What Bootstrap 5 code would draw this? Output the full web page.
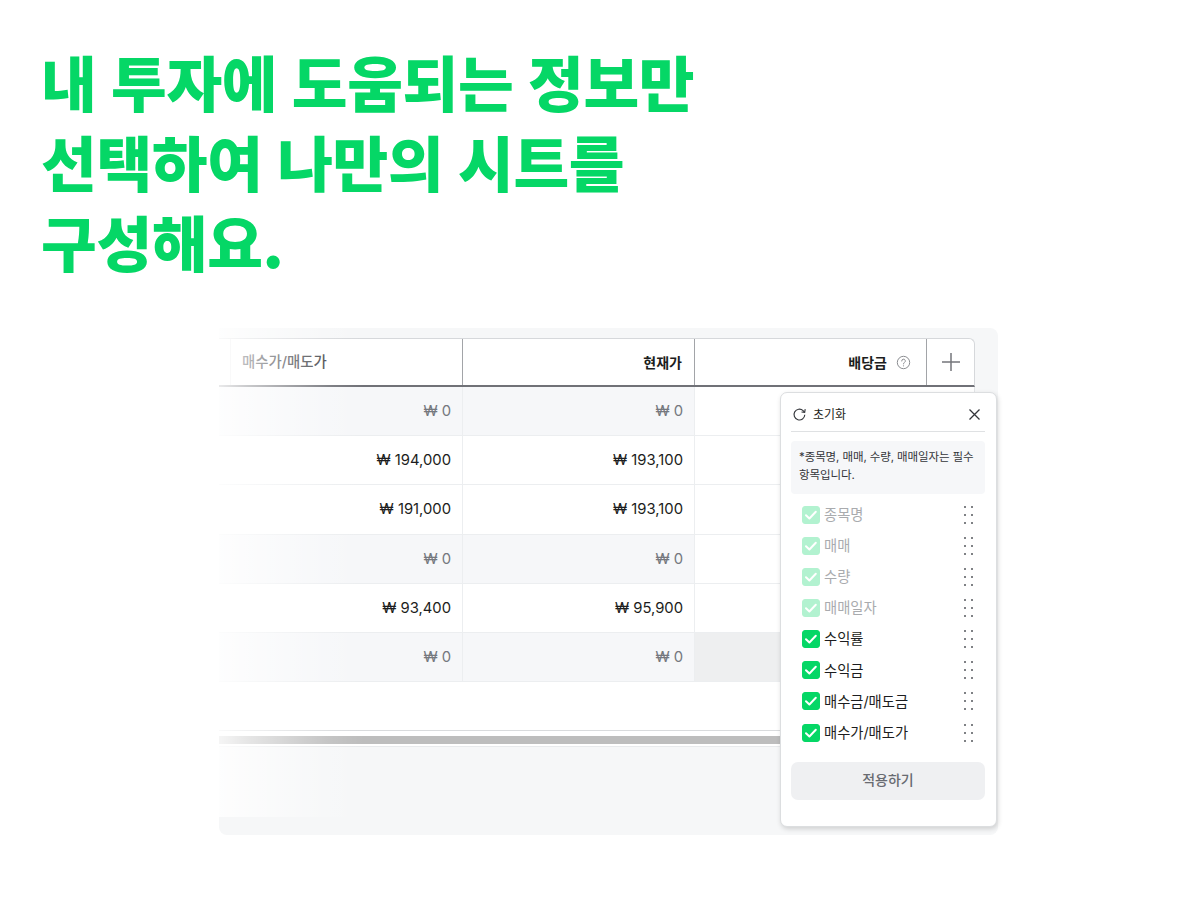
<!DOCTYPE html>
<html lang="ko">
<head>
<meta charset="utf-8">
<title>내 투자에 도움되는 정보만</title>
<link href="https://cdn.jsdelivr.net/npm/bootstrap@5.3.0/dist/css/bootstrap.min.css" rel="stylesheet">
<style>
html,body{height:100%;}
body{background:#fff;overflow:hidden;font-family:Inter,"Noto Sans CJK KR",sans-serif;color:#1c1d20;}
.headline{margin:0;padding:41px 0 0 41px;height:328px;font-family:"Noto Sans CJK KR",sans-serif;font-weight:900;font-size:60.6px;line-height:80px;letter-spacing:-.35px;word-spacing:-2px;color:#05d766;}
.frame{position:relative;margin-left:219px;width:779px;height:507px;padding-top:10px;background:#f6f7f8;border-radius:0 8px 8px 8px;}
.sheet{width:756px;}
.head-row{height:49px;background:#fff;border-top:1px solid #d6d8db;border-bottom:2px solid #707177;border-top-right-radius:6px;border-right:1px solid #d6d8db;font-size:14px;font-weight:500;}
.colw{width:244px;flex:none;}
.colm{width:232px;flex:none;}
.coll{flex:1 1 0;}
.head-cell{height:100%;padding:0 12px;display:flex;align-items:center;justify-content:flex-end;border-right:1px solid #a2a4a8;font-weight:700;}
.head-cell.first{justify-content:flex-start;padding-left:11px;margin-left:11px;width:233px;color:#3f4146;font-weight:500;font-size:14.4px;border-left:1px solid #e6e7e9;}
.head-cell.info{padding-right:15px;}
.info-icon{margin-left:9px;}
.head-add{display:flex;align-items:center;justify-content:center;height:100%;flex:1 1 0;}
.body-wrap{background:#fff;height:344px;border-bottom:1px solid #d9dbdd;border-right:1px solid #e4e6e8;}
.data-row{height:49.2px;border-bottom:1px solid #eceef0;font-size:14.8px;}
.data-row.zero{background:#f6f7f9;color:#75787e;}
.data-cell{height:100%;padding:0 11px 0 0;display:flex;align-items:center;justify-content:flex-end;border-right:1px solid #eceef0;}
.data-cell.hl{background:#eeeff0;border-right:0;}
.track{height:16px;width:756px;background:#fff;border-bottom:1px solid #e8eaec;padding-top:5px;}
.thumb{height:8px;background:#bdbdbd;}
.fade-left{position:absolute;left:0;top:0;width:145px;height:489px;background:linear-gradient(90deg,rgba(255,255,255,.85) 0,rgba(255,255,255,.62) 20%,rgba(255,255,255,.34) 50%,rgba(255,255,255,.1) 78%,rgba(255,255,255,0) 100%);pointer-events:none;}
.popover-panel{position:absolute;left:561px;top:64px;width:217px;height:435px;background:#fff;border:1px solid #dcdee0;border-radius:7px;box-shadow:1px 2px 5px rgba(0,0,0,.16);padding:0 11px 0 10px;}
.panel-top{height:39px;border-bottom:1px solid #dfe1e3;font-size:12px;padding:5px 4px 0 1px;}
.reset-label{margin-left:2px;}
.note{margin-top:9px;background:#f6f7f9;border-radius:4px;height:53px;padding:7px 8px;font-size:11.5px;line-height:18px;color:#33353a;letter-spacing:-.1px;}
.pick-list{margin-top:5px;}
.pick{height:31.15px;padding:0 11px;font-size:14.3px;display:flex;align-items:center;justify-content:space-between;}
.pick .form-check-input{width:18px;height:18px;margin:0 4px 0 0;border-radius:3px;background-color:#05d766;border-color:#05d766;opacity:1;float:none;background-size:18px 18px;}
.pick .form-check-input:checked{background-image:url("data:image/svg+xml,%3Csvg xmlns='http://www.w3.org/2000/svg' viewBox='0 0 18 18'%3E%3Cpath fill='none' stroke='%23fff' stroke-width='2' stroke-linecap='round' stroke-linejoin='round' d='M4 9.3l3.4 3.2L13.8 5.8'/%3E%3C/svg%3E");}
.pick.locked .form-check-input{opacity:.3;}
.pick.locked .pick-name{color:#a9abae;opacity:1;}
.pick-name{color:#1c1d20;}
.apply{display:block;width:100%;height:38px;margin-top:14px;padding:0 0 3px;border:0;border-radius:7px;background:#eff0f2;color:#686b71;font-size:14px;font-weight:500;}
</style>
</head>
<body>
<h1 class="headline">내 투자에 도움되는 정보만<br>선택하여 나만의 시트를<br>구성해요.</h1>
<div class="frame">
  <div class="sheet">
    <div class="head-row d-flex">
      <div class="colw head-cell first">매수가/매도가</div>
      <div class="colm head-cell">현재가</div>
      <div class="colm head-cell info"><span>배당금</span>
        <svg class="info-icon" width="15" height="15" viewBox="0 0 15 15" fill="none" stroke="#8c8e92" stroke-width="1"><circle cx="7.5" cy="7.5" r="6.2"/><path d="M5.7 6a1.8 1.8 0 1 1 2.7 1.5c-.6.4-.9.7-.9 1.4" stroke-linecap="round"/><circle cx="7.5" cy="10.8" r=".6" fill="#8c8e92" stroke="none"/></svg>
      </div>
      <div class="head-add"><svg width="18" height="18" viewBox="0 0 18 18" stroke="#74767b" stroke-width="1.5"><path d="M9 0v18M0 9h18"/></svg></div>
    </div>
    <div class="body-wrap">
      <div class="data-row zero d-flex"><div class="colw data-cell">₩ 0</div><div class="colm data-cell">₩ 0</div><div class="coll bg-white"></div></div>
      <div class="data-row d-flex"><div class="colw data-cell">₩ 194,000</div><div class="colm data-cell">₩ 193,100</div><div class="coll"></div></div>
      <div class="data-row d-flex"><div class="colw data-cell">₩ 191,000</div><div class="colm data-cell">₩ 193,100</div><div class="coll"></div></div>
      <div class="data-row zero d-flex"><div class="colw data-cell">₩ 0</div><div class="colm data-cell">₩ 0</div><div class="coll bg-white"></div></div>
      <div class="data-row d-flex"><div class="colw data-cell">₩ 93,400</div><div class="colm data-cell">₩ 95,900</div><div class="coll"></div></div>
      <div class="data-row zero d-flex"><div class="colw data-cell">₩ 0</div><div class="colm data-cell">₩ 0</div><div class="coll data-cell hl"></div></div>
    </div>
    <div class="track"><div class="thumb"></div></div>
  </div>
  <div class="fade-left"></div>
  <div class="popover-panel">
    <div class="panel-top d-flex align-items-center justify-content-between">
      <span class="d-flex align-items-center gap-1">
        <svg width="15" height="15" viewBox="0 0 15 15" fill="none" stroke="#33353a" stroke-width="1.1"><path d="M12.8 7.8a5.4 5.4 0 1 1-1.7-4.2l1.4 1.6"/><path d="M13.2 2.2l-.5 3.2-3.2-.4"/></svg>
        <span class="reset-label">초기화</span>
      </span>
      <svg width="13" height="13" viewBox="0 0 13 13" stroke="#33353a" stroke-width="1.3"><path d="M1.5 1.5l10 10M11.5 1.5l-10 10"/></svg>
    </div>
    <div class="note">*종목명, 매매, 수량, 매매일자는 필수 항목입니다.</div>
    <div class="pick-list">
      <div class="pick locked"><span class="d-flex align-items-center"><input class="form-check-input" type="checkbox" checked disabled><span class="pick-name">종목명</span></span><svg width="10" height="18" viewBox="0 0 10 18" fill="#55575c"><circle cx="1" cy="1" r="1"/><circle cx="8" cy="1" r="1"/><circle cx="1" cy="9" r="1"/><circle cx="8" cy="9" r="1"/><circle cx="1" cy="17" r="1"/><circle cx="8" cy="17" r="1"/></svg></div>
      <div class="pick locked"><span class="d-flex align-items-center"><input class="form-check-input" type="checkbox" checked disabled><span class="pick-name">매매</span></span><svg width="10" height="18" viewBox="0 0 10 18" fill="#55575c"><circle cx="1" cy="1" r="1"/><circle cx="8" cy="1" r="1"/><circle cx="1" cy="9" r="1"/><circle cx="8" cy="9" r="1"/><circle cx="1" cy="17" r="1"/><circle cx="8" cy="17" r="1"/></svg></div>
      <div class="pick locked"><span class="d-flex align-items-center"><input class="form-check-input" type="checkbox" checked disabled><span class="pick-name">수량</span></span><svg width="10" height="18" viewBox="0 0 10 18" fill="#55575c"><circle cx="1" cy="1" r="1"/><circle cx="8" cy="1" r="1"/><circle cx="1" cy="9" r="1"/><circle cx="8" cy="9" r="1"/><circle cx="1" cy="17" r="1"/><circle cx="8" cy="17" r="1"/></svg></div>
      <div class="pick locked"><span class="d-flex align-items-center"><input class="form-check-input" type="checkbox" checked disabled><span class="pick-name">매매일자</span></span><svg width="10" height="18" viewBox="0 0 10 18" fill="#55575c"><circle cx="1" cy="1" r="1"/><circle cx="8" cy="1" r="1"/><circle cx="1" cy="9" r="1"/><circle cx="8" cy="9" r="1"/><circle cx="1" cy="17" r="1"/><circle cx="8" cy="17" r="1"/></svg></div>
      <div class="pick"><span class="d-flex align-items-center"><input class="form-check-input" type="checkbox" checked><span class="pick-name">수익률</span></span><svg width="10" height="18" viewBox="0 0 10 18" fill="#55575c"><circle cx="1" cy="1" r="1"/><circle cx="8" cy="1" r="1"/><circle cx="1" cy="9" r="1"/><circle cx="8" cy="9" r="1"/><circle cx="1" cy="17" r="1"/><circle cx="8" cy="17" r="1"/></svg></div>
      <div class="pick"><span class="d-flex align-items-center"><input class="form-check-input" type="checkbox" checked><span class="pick-name">수익금</span></span><svg width="10" height="18" viewBox="0 0 10 18" fill="#55575c"><circle cx="1" cy="1" r="1"/><circle cx="8" cy="1" r="1"/><circle cx="1" cy="9" r="1"/><circle cx="8" cy="9" r="1"/><circle cx="1" cy="17" r="1"/><circle cx="8" cy="17" r="1"/></svg></div>
      <div class="pick"><span class="d-flex align-items-center"><input class="form-check-input" type="checkbox" checked><span class="pick-name">매수금/매도금</span></span><svg width="10" height="18" viewBox="0 0 10 18" fill="#55575c"><circle cx="1" cy="1" r="1"/><circle cx="8" cy="1" r="1"/><circle cx="1" cy="9" r="1"/><circle cx="8" cy="9" r="1"/><circle cx="1" cy="17" r="1"/><circle cx="8" cy="17" r="1"/></svg></div>
      <div class="pick"><span class="d-flex align-items-center"><input class="form-check-input" type="checkbox" checked><span class="pick-name">매수가/매도가</span></span><svg width="10" height="18" viewBox="0 0 10 18" fill="#55575c"><circle cx="1" cy="1" r="1"/><circle cx="8" cy="1" r="1"/><circle cx="1" cy="9" r="1"/><circle cx="8" cy="9" r="1"/><circle cx="1" cy="17" r="1"/><circle cx="8" cy="17" r="1"/></svg></div>
    </div>
    <button type="button" class="apply">적용하기</button>
  </div>
</div>
<script src="https://cdn.jsdelivr.net/npm/bootstrap@5.3.0/dist/js/bootstrap.bundle.min.js"></script>
</body>
</html>
